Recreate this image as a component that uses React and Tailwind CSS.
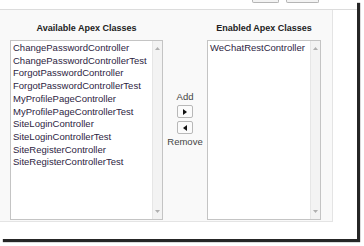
const available = [
  'ChangePasswordController',
  'ChangePasswordControllerTest',
  'ForgotPasswordController',
  'ForgotPasswordControllerTest',
  'MyProfilePageController',
  'MyProfilePageControllerTest',
  'SiteLoginController',
  'SiteLoginControllerTest',
  'SiteRegisterController',
  'SiteRegisterControllerTest',
];

const enabled = ['WeChatRestController'];

function ListBox({ items }) {
  return (
    <div className="h-[180px] flex bg-white border border-[#c4c4c4]">
      <div className="flex-1 pl-[2px] pt-[1px] text-[9.5px] leading-[12.7px] text-[#2d2442] whitespace-nowrap overflow-hidden">
        {items.map((item) => (
          <div key={item}>{item}</div>
        ))}
      </div>
      <div className="w-[10px] bg-[#f3f3f3] border-l border-[#e6e6e6] flex flex-col justify-between items-center py-[6px]">
        <svg width="5" height="3" viewBox="0 0 5 3">
          <polygon points="0,3 5,3 2.5,0" fill="#b0b0b0" />
        </svg>
        <svg width="5" height="3" viewBox="0 0 5 3">
          <polygon points="0,0 5,0 2.5,3" fill="#b0b0b0" />
        </svg>
      </div>
    </div>
  );
}

function ArrowButton({ dir }) {
  return (
    <div className="w-[16px] h-[13px] bg-[#fbfbfb] border border-[#b8b8b8] rounded-[2px] flex items-center justify-center">
      <svg width="4" height="6" viewBox="0 0 4 6">
        {dir === 'right' ? (
          <polygon points="0,0 4,3 0,6" fill="#111" />
        ) : (
          <polygon points="4,0 0,3 4,6" fill="#111" />
        )}
      </svg>
    </div>
  );
}

export default function App() {
  return (
    <div className="w-[364px] h-[246px] bg-white overflow-hidden font-['Liberation_Sans',Arial,sans-serif]">
      <div className="w-[357px] h-[239px] bg-white shadow-[3px_3px_1px_rgba(0,0,0,0.85)] flex flex-col">
        <div className="h-[10px] border-b border-[#dcdcdc] flex justify-end items-start pr-[38px] gap-[7px]">
          <div className="w-[27px] h-[3px] border border-t-0 border-[#b5b5b5] rounded-b-[2px] bg-[#f3f3f3]" />
          <div className="w-[33px] h-[3px] border border-t-0 border-[#b5b5b5] rounded-b-[2px] bg-[#f3f3f3]" />
        </div>
        <div className="w-[333px] h-[212px] bg-[#f9f9f9] border-r border-b border-[#e4e4e4] pl-[10px] pt-[12px]">
          <div className="grid grid-cols-[153px_44px_114px] text-[9px] leading-[12px] font-bold text-[#222] text-center">
            <div>Available Apex Classes</div>
            <div />
            <div>Enabled Apex Classes</div>
          </div>
          <div className="grid grid-cols-[153px_44px_114px] mt-[6px]">
            <ListBox items={available} />
            <div className="flex flex-col items-center pt-[51px] text-[9.5px] leading-[12px] text-[#444]">
              <div>Add</div>
              <div className="mt-[2px] flex flex-col gap-[3px]">
                <ArrowButton dir="right" />
                <ArrowButton dir="left" />
              </div>
              <div className="mt-[2px]">Remove</div>
            </div>
            <ListBox items={enabled} />
          </div>
        </div>
      </div>
    </div>
  );
}
